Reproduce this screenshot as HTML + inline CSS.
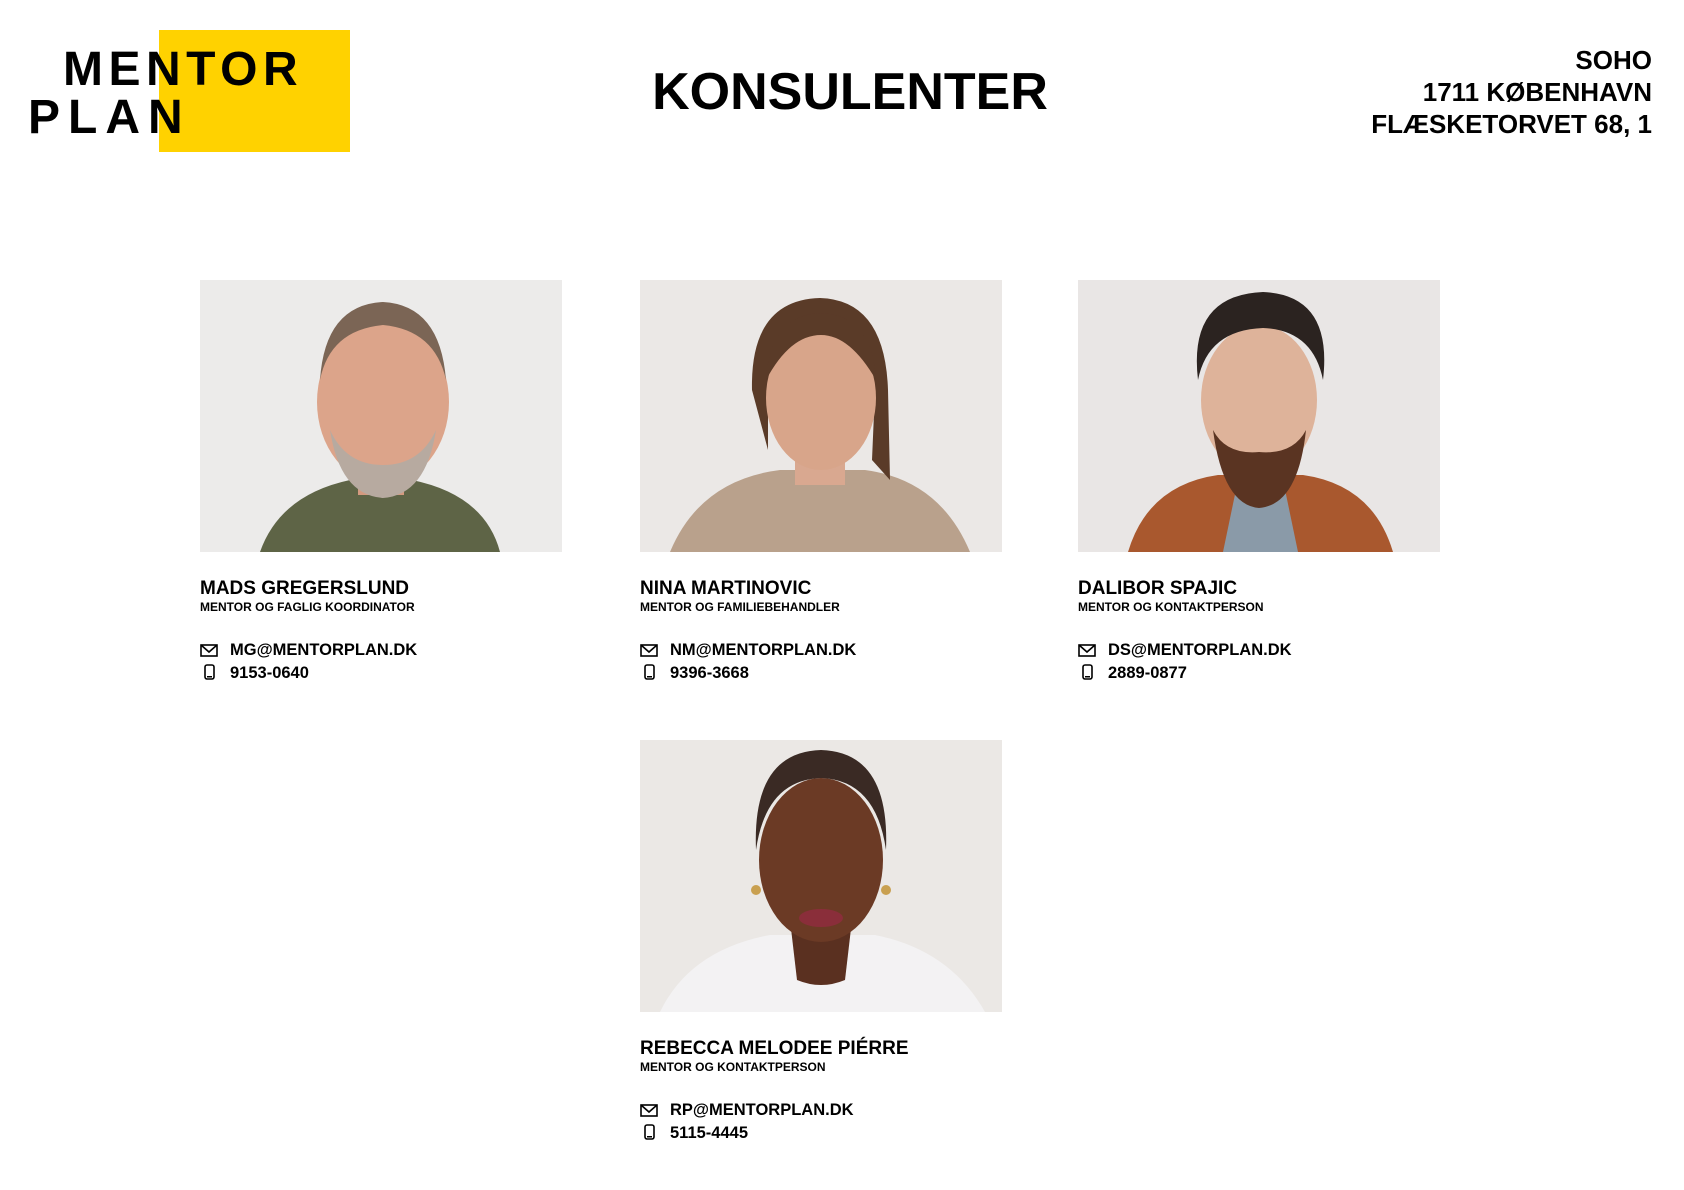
<!DOCTYPE html>
<html><head><meta charset="utf-8">
<style>
*{margin:0;padding:0;box-sizing:border-box}
body{width:1684px;height:1190px;background:#fff;position:relative;font-family:"Liberation Sans",Arial,sans-serif;color:#000;overflow:hidden}
.abs{position:absolute}
.yb{left:159px;top:30px;width:191px;height:122px;background:#ffd200}
.logo{font-weight:700;font-size:48px;letter-spacing:4.5px;line-height:1}
h1{position:absolute;left:560px;width:600px;text-align:center;top:66px;font-size:52px;font-weight:700;line-height:1;padding-left:-10px}
.addr{right:32px;top:44px;text-align:right;font-weight:700;font-size:26px;line-height:32px}
.card{position:absolute;width:362px}
.ph{width:362px;height:272px;display:block}
.nm{position:absolute;top:298px;left:0;font-size:19px;font-weight:700;white-space:nowrap}
.rl{position:absolute;top:320px;left:0;font-size:12px;font-weight:700;white-space:nowrap}
.ln{position:absolute;left:30px;font-size:16.5px;font-weight:700;white-space:nowrap}
.ic{position:absolute;left:0}
</style></head><body>
<div class="abs yb"></div>
<div class="abs logo" style="left:63px;top:46px;letter-spacing:5.5px">MENTOR</div>
<div class="abs logo" style="left:28px;top:94px;letter-spacing:8px">PLAN</div>
<h1 style="left:550px">KONSULENTER</h1>
<div class="abs addr">SOHO<br>1711 KØBENHAVN<br>FLÆSKETORVET 68, 1</div>

<div class="card" style="left:200px;top:280px">
<svg class="ph" viewBox="0 0 362 272"><rect width="362" height="272" fill="#ecebea"/><path d="M60 272 Q80 215 150 200 L212 200 Q285 215 300 272Z" fill="#5e6446"/><rect x="158" y="170" width="46" height="45" fill="#d49a80"/><ellipse cx="183" cy="122" rx="66" ry="82" fill="#dca48a"/><path d="M120 100 Q125 25 183 22 Q240 25 246 100 Q235 50 183 45 Q130 50 120 100Z" fill="#7b6555"/><path d="M130 150 Q140 215 183 218 Q226 215 236 150 Q220 185 183 185 Q146 185 130 150Z" fill="#b7aaa0"/></svg>
<div class="nm">MADS GREGERSLUND</div><div class="rl">MENTOR OG FAGLIG KOORDINATOR</div>
<svg class="ic" style="top:364px" width="18" height="13" viewBox="0 0 18 13"><rect x="1" y="1" width="16" height="11" fill="none" stroke="#000" stroke-width="1.6"/><path d="M1 1 L9 8 L17 1" fill="none" stroke="#000" stroke-width="1.6"/></svg>
<div class="ln" style="top:361px">MG@MENTORPLAN.DK</div>
<svg class="ic" style="top:384px;left:4px" width="11" height="16" viewBox="0 0 11 16"><rect x="1" y="1" width="9" height="14" rx="2" fill="none" stroke="#000" stroke-width="1.6"/><rect x="3" y="12" width="5" height="1.5" fill="#000"/></svg>
<div class="ln" style="top:384px">9153-0640</div>
</div>

<div class="card" style="left:640px;top:280px">
<svg class="ph" viewBox="0 0 362 272"><rect width="362" height="272" fill="#ebe8e6"/><path d="M30 272 Q60 200 140 190 L225 190 Q300 200 330 272Z" fill="#b9a18c"/><rect x="155" y="165" width="50" height="40" fill="#d9a890"/><path d="M112 110 Q110 20 180 18 Q245 20 248 110 L250 200 L232 180 L235 110 Q180 60 128 110 L128 170Z" fill="#5a3b28"/><ellipse cx="181" cy="118" rx="55" ry="72" fill="#d8a58a"/><path d="M126 100 Q130 35 181 33 Q232 35 236 100 Q210 55 181 55 Q150 55 126 100Z" fill="#5a3b28"/></svg>
<div class="nm">NINA MARTINOVIC</div><div class="rl">MENTOR OG FAMILIEBEHANDLER</div>
<svg class="ic" style="top:364px" width="18" height="13" viewBox="0 0 18 13"><rect x="1" y="1" width="16" height="11" fill="none" stroke="#000" stroke-width="1.6"/><path d="M1 1 L9 8 L17 1" fill="none" stroke="#000" stroke-width="1.6"/></svg>
<div class="ln" style="top:361px">NM@MENTORPLAN.DK</div>
<svg class="ic" style="top:384px;left:4px" width="11" height="16" viewBox="0 0 11 16"><rect x="1" y="1" width="9" height="14" rx="2" fill="none" stroke="#000" stroke-width="1.6"/><rect x="3" y="12" width="5" height="1.5" fill="#000"/></svg>
<div class="ln" style="top:384px">9396-3668</div>
</div>

<div class="card" style="left:1078px;top:280px">
<svg class="ph" viewBox="0 0 362 272"><rect width="362" height="272" fill="#e9e6e5"/><path d="M50 272 Q70 205 140 195 L225 195 Q295 205 315 272Z" fill="#a9582e"/><path d="M160 200 L205 200 L220 272 L145 272Z" fill="#8a9aa8"/><rect x="155" y="165" width="52" height="40" fill="#d7a488"/><ellipse cx="181" cy="120" rx="58" ry="75" fill="#deb39a"/><path d="M120 100 Q110 15 185 12 Q255 15 245 100 Q235 50 185 48 Q130 50 120 100Z" fill="#2b2320"/><path d="M135 150 Q145 225 181 228 Q220 225 228 150 Q215 175 181 172 Q148 175 135 150Z" fill="#5a3422"/></svg>
<div class="nm">DALIBOR SPAJIC</div><div class="rl">MENTOR OG KONTAKTPERSON</div>
<svg class="ic" style="top:364px" width="18" height="13" viewBox="0 0 18 13"><rect x="1" y="1" width="16" height="11" fill="none" stroke="#000" stroke-width="1.6"/><path d="M1 1 L9 8 L17 1" fill="none" stroke="#000" stroke-width="1.6"/></svg>
<div class="ln" style="top:361px">DS@MENTORPLAN.DK</div>
<svg class="ic" style="top:384px;left:4px" width="11" height="16" viewBox="0 0 11 16"><rect x="1" y="1" width="9" height="14" rx="2" fill="none" stroke="#000" stroke-width="1.6"/><rect x="3" y="12" width="5" height="1.5" fill="#000"/></svg>
<div class="ln" style="top:384px">2889-0877</div>
</div>

<div class="card" style="left:640px;top:740px">
<svg class="ph" viewBox="0 0 362 272"><rect width="362" height="272" fill="#ebe8e5"/><path d="M20 272 Q50 210 130 195 L235 195 Q310 210 345 272Z" fill="#f3f2f3"/><path d="M150 180 L212 180 L205 240 Q181 250 157 240Z" fill="#5a3020"/><ellipse cx="181" cy="120" rx="62" ry="82" fill="#6b3a25"/><path d="M116 110 Q112 12 181 10 Q250 12 246 110 Q236 40 181 38 Q126 40 116 110Z" fill="#3a2a24"/><circle cx="116" cy="150" r="5" fill="#c9a050"/><circle cx="246" cy="150" r="5" fill="#c9a050"/><ellipse cx="181" cy="178" rx="22" ry="9" fill="#8a2e3a"/></svg>
<div class="nm">REBECCA MELODEE PIÉRRE</div><div class="rl">MENTOR OG KONTAKTPERSON</div>
<svg class="ic" style="top:364px" width="18" height="13" viewBox="0 0 18 13"><rect x="1" y="1" width="16" height="11" fill="none" stroke="#000" stroke-width="1.6"/><path d="M1 1 L9 8 L17 1" fill="none" stroke="#000" stroke-width="1.6"/></svg>
<div class="ln" style="top:361px">RP@MENTORPLAN.DK</div>
<svg class="ic" style="top:384px;left:4px" width="11" height="16" viewBox="0 0 11 16"><rect x="1" y="1" width="9" height="14" rx="2" fill="none" stroke="#000" stroke-width="1.6"/><rect x="3" y="12" width="5" height="1.5" fill="#000"/></svg>
<div class="ln" style="top:384px">5115-4445</div>
</div>
</body></html>
